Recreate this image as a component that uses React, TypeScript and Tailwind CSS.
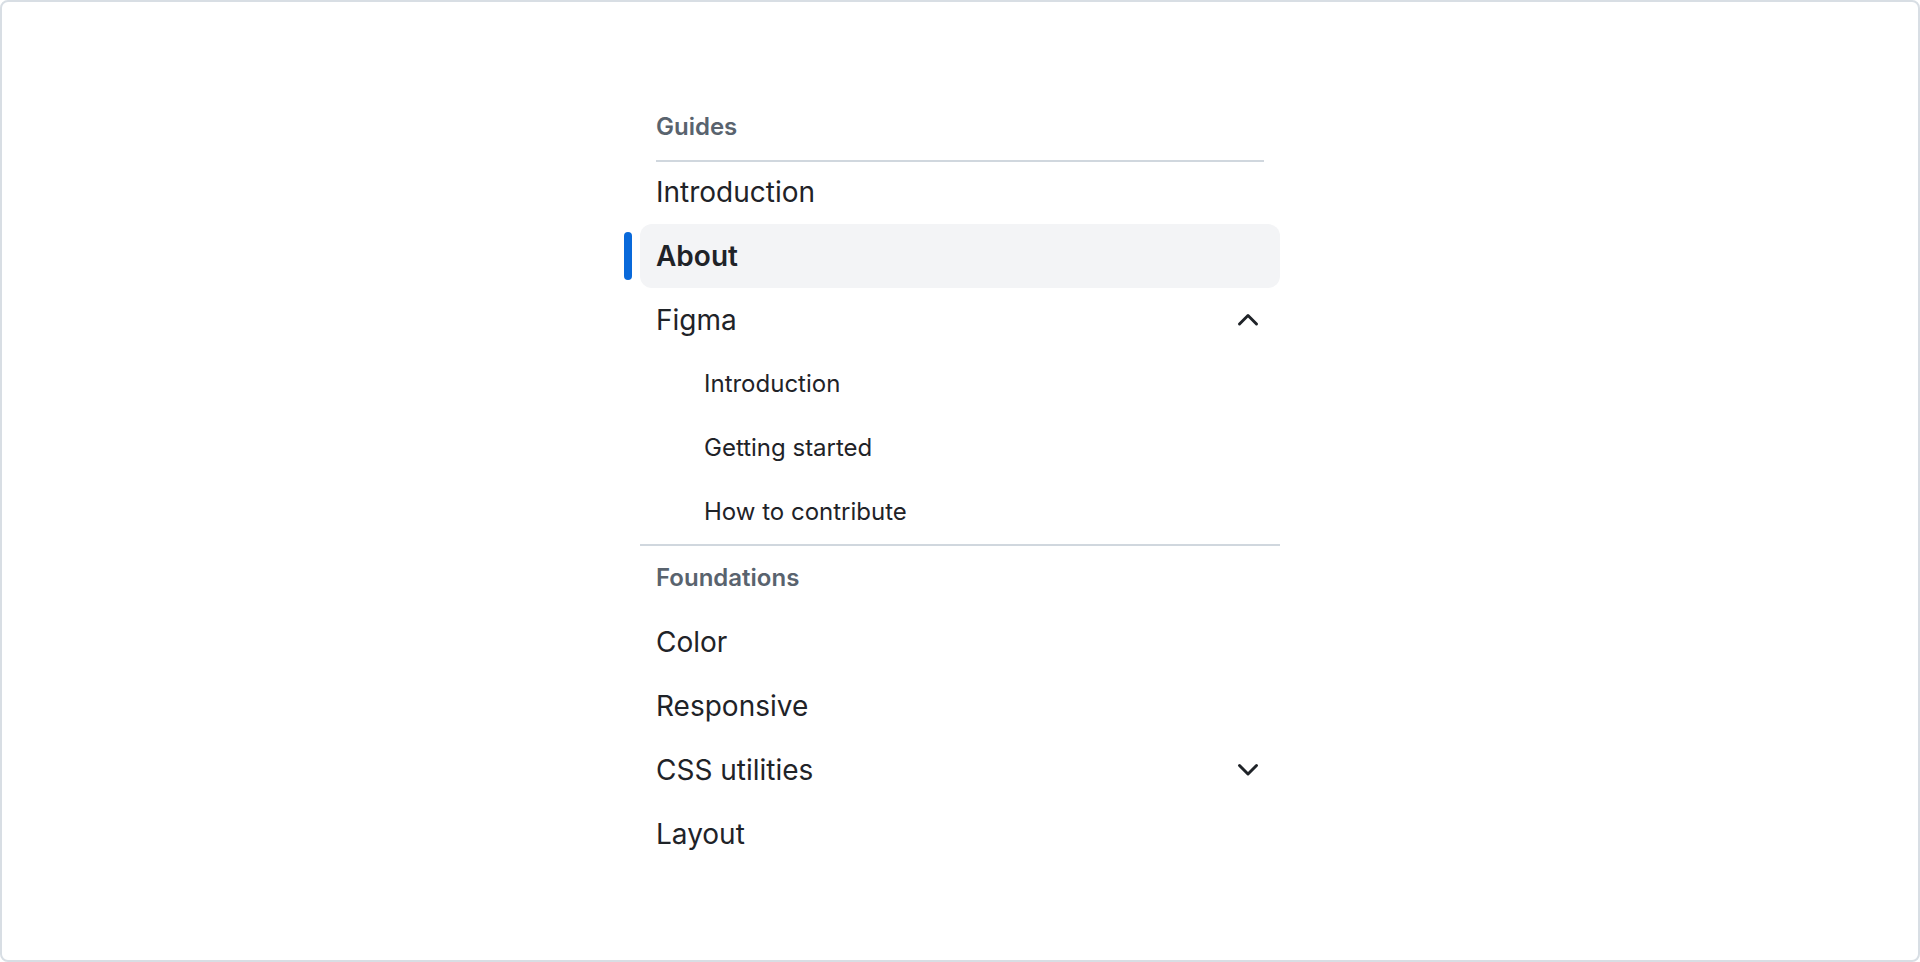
import React from 'react'

type NavItem = {
  label: string
  current?: boolean
  expanded?: boolean
  children?: string[]
}

const guides: NavItem[] = [
  { label: 'Introduction' },
  { label: 'About', current: true },
  { label: 'Figma', expanded: true, children: ['Introduction', 'Getting started', 'How to contribute'] },
]

const foundations: NavItem[] = [
  { label: 'Color' },
  { label: 'Responsive' },
  { label: 'CSS utilities', expanded: false, children: [] },
  { label: 'Layout' },
]

const ChevronUp = () => (
  <svg width="32" height="32" viewBox="0 0 16 16" fill="#1f2328">
    <path d="M3.22 10.53a.749.749 0 0 1 0-1.06l4.25-4.25a.749.749 0 0 1 1.06 0l4.25 4.25a.749.749 0 0 1-1.06 1.06L8 6.811 4.28 10.53a.749.749 0 0 1-1.06 0Z" />
  </svg>
)

const ChevronDown = () => (
  <svg width="32" height="32" viewBox="0 0 16 16" fill="#1f2328">
    <path d="M12.78 5.22a.749.749 0 0 1 0 1.06l-4.25 4.25a.749.749 0 0 1-1.06 0L3.22 6.28a.749.749 0 1 1 1.06-1.06L8 8.939l3.72-3.719a.749.749 0 0 1 1.06 0Z" />
  </svg>
)

const Heading: React.FC<{ title: string; tall?: boolean }> = ({ title, tall }) => (
  <div
    className={
      (tall ? 'h-[66px] ' : 'h-[64px] ') +
      'px-4 flex items-center text-[24px] font-semibold text-[#59636e]'
    }
  >
    {title}
  </div>
)

const Item: React.FC<{ item: NavItem }> = ({ item }) => (
  <>
    <div
      className={
        item.current
          ? 'relative h-[64px] px-4 flex items-center justify-between rounded-[12px] bg-[#f3f4f6] text-[28px] font-semibold text-[#1f2328]'
          : 'relative h-[64px] px-4 flex items-center justify-between rounded-[12px] text-[28px] text-[#1f2328]'
      }
    >
      {item.current && (
        <span className="absolute left-[-16px] top-[8px] h-[48px] w-[8px] rounded-full bg-[#0969da]"></span>
      )}
      <span>{item.label}</span>
      {item.children && (item.expanded ? <ChevronUp /> : <ChevronDown />)}
    </div>
    {item.expanded &&
      item.children?.map((child) => (
        <div key={child} className="h-[64px] pl-[64px] pr-4 flex items-center text-[24px] text-[#1f2328]">
          {child}
        </div>
      ))}
  </>
)

export default function App() {
  return (
    <div
      className="h-[962px] w-full rounded-[8px] border-2 border-[#d8dee4] bg-white flex justify-center pt-[92px]"
      style={{ fontFamily: 'Inter, "Noto Sans", sans-serif' }}
    >
      <nav className="w-[640px]">
        <Heading title="Guides" tall />
        <div className="relative mx-4 h-[2px] mb-[-2px] bg-[#d0d7de]"></div>
        {guides.map((item) => (
          <Item key={item.label} item={item} />
        ))}
        <div className="h-[2px] bg-[#d0d7de]"></div>
        <Heading title="Foundations" />
        {foundations.map((item) => (
          <Item key={item.label} item={item} />
        ))}
      </nav>
    </div>
  )
}
